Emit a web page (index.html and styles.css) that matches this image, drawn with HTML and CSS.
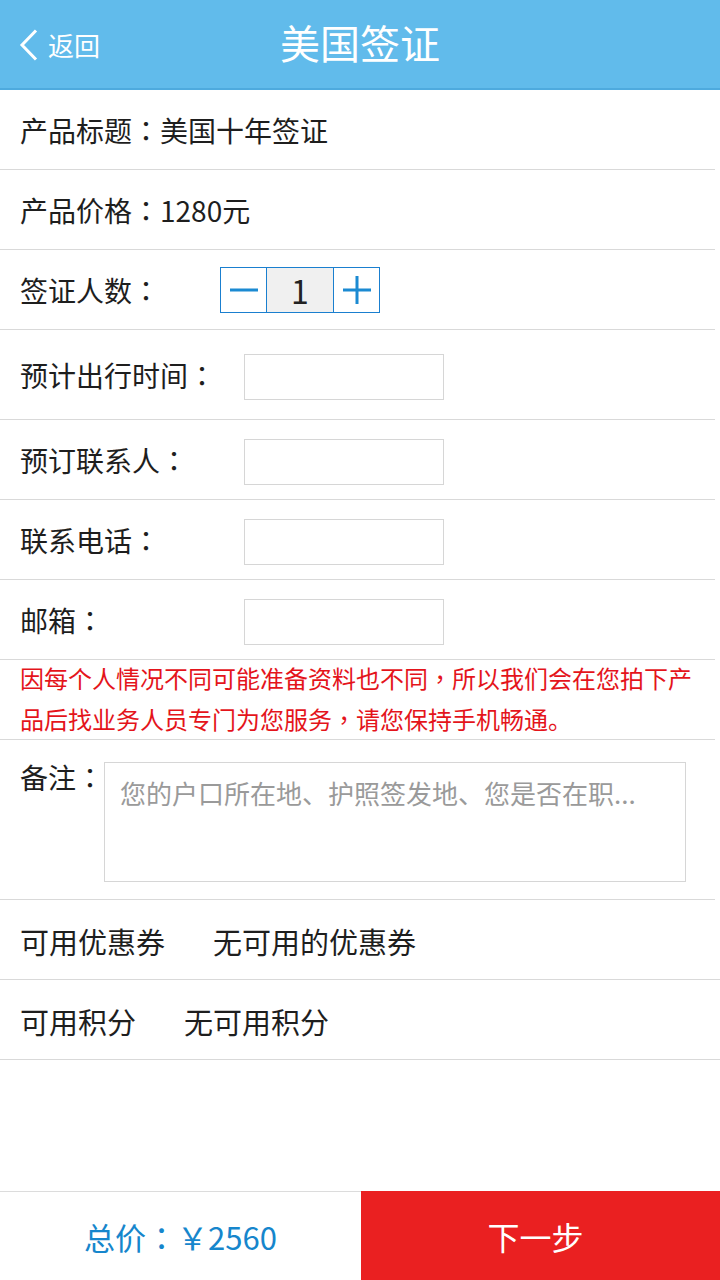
FILE: index.html
```html
<!DOCTYPE html>
<html lang="zh-CN">
<head>
<meta charset="utf-8">
<title>美国签证</title>
<link rel="stylesheet" href="styles.css">
</head>
<body>
<div class="page">
  <header class="topbar">
    <a class="back">
      <svg class="back-icon" width="20" height="32" viewBox="0 0 20 32"><polyline points="17,1.5 3,16 17,30.5" fill="none" stroke="#fff" stroke-width="3" stroke-linejoin="miter"/></svg>
      <span class="back-text">返回</span>
    </a>
    <h1 class="title">美国签证</h1>
  </header>

  <main class="form">
    <div class="row row-short">
      <span class="text">产品标题<span class="punct" lang="zh-TW">：</span>美国十年签证</span>
    </div>
    <div class="row row-short">
      <span class="text">产品价格<span class="punct" lang="zh-TW">：</span>1280元</span>
    </div>
    <div class="row row-short">
      <span class="label label-stepper">签证人数<span class="punct" lang="zh-TW">：</span></span>
      <div class="stepper">
        <span class="step-btn"><svg width="28" height="28" viewBox="0 0 28 28"><rect x="0" y="12.5" width="28" height="3" fill="#1b8ad2"/></svg></span>
        <span class="step-num">1</span>
        <span class="step-btn"><svg width="28" height="28" viewBox="0 0 28 28"><rect x="0" y="12.5" width="28" height="3" fill="#1b8ad2"/><rect x="12.5" y="0" width="3" height="28" fill="#1b8ad2"/></svg></span>
      </div>
    </div>
    <div class="row row-tall">
      <span class="label">预计出行时间<span class="punct" lang="zh-TW">：</span></span>
      <span class="input"></span>
    </div>
    <div class="row row-short">
      <span class="label">预订联系人<span class="punct" lang="zh-TW">：</span></span>
      <span class="input"></span>
    </div>
    <div class="row row-short">
      <span class="label">联系电话<span class="punct" lang="zh-TW">：</span></span>
      <span class="input"></span>
    </div>
    <div class="row row-short">
      <span class="label">邮箱<span class="punct" lang="zh-TW">：</span></span>
      <span class="input"></span>
    </div>
    <div class="row notice">
      <p>因每个人情况不同可能准备资料也不同<span class="punct" lang="zh-TW">，</span>所以我们会在您拍下产品后找业务人员专门为您服务<span class="punct" lang="zh-TW">，</span>请您保持手机畅通。</p>
    </div>
    <div class="row remark">
      <span class="remark-label">备注<span class="punct" lang="zh-TW">：</span></span>
      <div class="textarea"><span class="placeholder">您的户口所在地、护照签发地、您是否在职...</span></div>
    </div>
    <div class="row row-short full">
      <span class="text big">可用优惠券</span>
      <span class="text big">无可用的优惠券</span>
    </div>
    <div class="row row-short full">
      <span class="text big">可用积分</span>
      <span class="text big">无可用积分</span>
    </div>
  </main>

  <footer class="bottombar">
    <div class="total">总价<span class="punct" lang="zh-TW">：</span>￥2560</div>
    <div class="next">下一步</div>
  </footer>
</div>
</body>
</html>
```

FILE: styles.css
```css
* { box-sizing: border-box; }
html, body { margin: 0; padding: 0; }
body {
  background: #fff;
  font-family: "Noto Sans CJK SC", "Noto Sans", sans-serif;
  color: #1e1e1e;
}
.punct {
  font-family: "Noto Sans CJK TC", "Noto Sans CJK SC", sans-serif;
}
.page {
  width: 720px;
  height: 1280px;
  display: flex;
  flex-direction: column;
}
.topbar {
  height: 90px;
  background: #61bbeb;
  border-bottom: 2px solid #4eaade;
  display: flex;
  align-items: center;
  justify-content: center;
  position: relative;
}
.back {
  position: absolute;
  left: 19px;
  top: 29px;
  display: flex;
  align-items: center;
  gap: 9px;
  color: #fff;
}
.back-text {
  font-size: 26px;
  line-height: 32px;
}
.title {
  margin: 0 0 4px;
  font-size: 40px;
  font-weight: normal;
  color: #fff;
  line-height: 1;
}
.form {
  display: flex;
  flex-direction: column;
}
.row {
  display: flex;
  align-items: center;
  padding-left: 20px;
  border-bottom: 1px solid #d9d9d9;
  margin-right: 5px;
}
.row.full { margin-right: 0; gap: 48px; }
.row-short { height: 80px; }
.row-tall { height: 90px; }
.text, .label {
  font-size: 28px;
  line-height: 30px;
  white-space: nowrap;
}
.text.big {
  font-size: 29px;
  margin-top: 3px;
}
.label { width: 224px; flex: none; }
.label-stepper { width: 200px; }
.stepper {
  display: flex;
  height: 46px;
  border: 1px solid #1a7fcf;
}
.step-btn {
  width: 45px;
  display: flex;
  align-items: center;
  justify-content: center;
}
.step-num {
  width: 68px;
  border-left: 1px solid #1a7fcf;
  border-right: 1px solid #1a7fcf;
  background: #f0f0f0;
  font-size: 32px;
  line-height: 44px;
  text-align: center;
  color: #222;
}
.input {
  width: 200px;
  height: 46px;
  border: 1px solid #d6d6d6;
  margin-top: 5px;
}
.notice {
  height: 80px;
  align-items: flex-start;
}
.notice p {
  margin: -3px 0 0;
  padding-right: 5px;
  font-size: 24px;
  line-height: 41px;
  color: #e4141b;
}
.remark {
  height: 160px;
  align-items: flex-start;
  padding-top: 22px;
}
.remark-label {
  width: 84px;
  font-size: 28px;
  line-height: 30px;
  white-space: nowrap;
  flex: none;
}
.textarea {
  width: 582px;
  height: 120px;
  flex: none;
  border: 1px solid #d6d6d6;
  padding: 15px 15px 0;
}
.placeholder {
  font-size: 26px;
  line-height: 30px;
  color: #9a9a9a;
}
.bottombar {
  margin-top: auto;
  height: 89px;
  display: flex;
  border-top: 1px solid #dcdcdc;
}
.total {
  width: 361px;
  display: flex;
  align-items: center;
  justify-content: center;
  font-size: 31px;
  color: #1686cc;
}
.next {
  flex: 1;
  background: #ea2021;
  margin-top: -1px;
  padding-right: 10px;
  display: flex;
  align-items: center;
  justify-content: center;
  font-size: 32px;
  color: #fff;
}
```
